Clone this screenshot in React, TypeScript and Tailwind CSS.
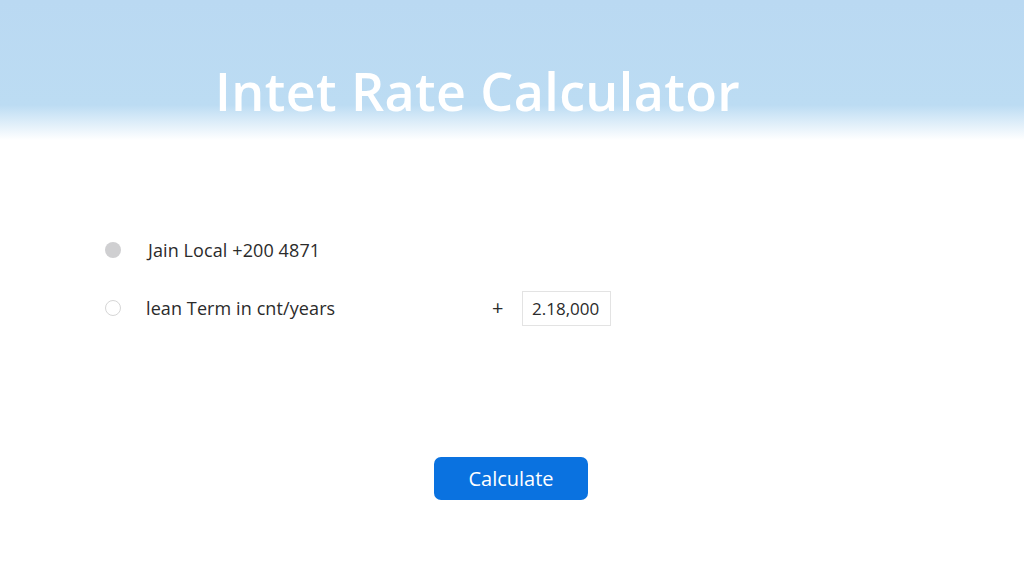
import React, { useState } from "react";

export default function App() {
  const [mode, setMode] = useState<"local" | "term">("local");
  const [amount, setAmount] = useState("2.18,000");

  return (
    <div className="w-[1024px] h-[585px] bg-white font-['Open_Sans',sans-serif] text-[#2b2b2b] overflow-hidden flex flex-col">
      {/* Header band fading into the page */}
      <header className="h-[140px] bg-gradient-to-b from-[#bad9f2] via-[#bcdcf3] via-75% to-white flex items-start">
        <h1 className="ml-[215px] mt-[65px] text-[52px] font-semibold text-white leading-none tracking-[0.4px]">
          Intet Rate Calculator
        </h1>
      </header>

      <main className="flex flex-col pl-[105px] pt-[93px]">
        {/* Option: local */}
        <div className="flex items-center h-[34px]">
          <button
            onClick={() => setMode("local")}
            className={
              mode === "local"
                ? "w-4 h-4 rounded-full bg-[#cfcfd1]"
                : "w-4 h-4 rounded-full border border-[#d6d6d6] bg-white"
            }
          />
          <span className="ml-[27px] text-[18px] tracking-[0.1px]">Jain Local +200 4871</span>
        </div>

        {/* Option: term + amount */}
        <div className="flex items-center h-[36px] mt-[23px]">
          <button
            onClick={() => setMode("term")}
            className={
              mode === "term"
                ? "w-4 h-4 rounded-full bg-[#cfcfd1]"
                : "w-4 h-4 rounded-full border border-[#d6d6d6] bg-white"
            }
          />
          <span className="ml-[25px] text-[18px] tracking-[0.1px] w-[346px]">lean Term in cnt/years</span>
          <span className="text-[20px] leading-none w-[30px]">+</span>
          <input
            value={amount}
            onChange={(e) => setAmount(e.target.value)}
            className="w-[89px] h-[35px] border border-[#e3e3e3] px-[9px] text-[17px] outline-none"
          />
        </div>

        <div className="flex justify-center mt-[131px] ml-[-105px]">
          <button className="ml-[-2px] w-[154px] h-[43px] rounded-[7px] bg-[#0a72e0] text-white text-[20px]">
            Calculate
          </button>
        </div>
      </main>
    </div>
  );
}
